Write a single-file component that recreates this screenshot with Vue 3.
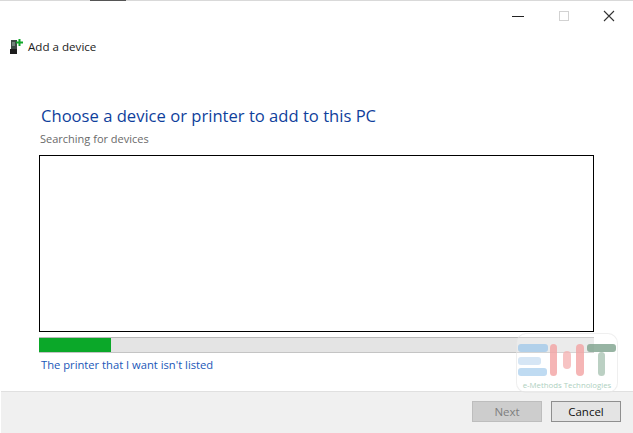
<template>
  <div class="dialog">
    <div class="top-edge"><span class="edge-blob"></span></div>

    <div class="window-controls">
      <svg class="ctl" width="12" height="12" viewBox="0 0 12 12"><path d="M0 6.500h12" stroke="#222" stroke-width="1" fill="none" /></svg>
      <svg class="ctl" width="12" height="12" viewBox="0 0 12 12"><rect x="1.500" y="1.500" width="9" height="9" stroke="#d2d2d2" fill="none" /></svg>
      <svg class="ctl" width="12" height="12" viewBox="0 0 12 12"><path d="M1 1l10 10M11 1L1 11" stroke="#333" stroke-width="1.100" fill="none" /></svg>
    </div>

    <div class="title-row">
      <svg class="device-icon" width="13" height="15" viewBox="0 0 13 15">
        <path d="M1 1h6v9H1z" fill="#3c4a44" />
        <rect x="2" y="3" width="3" height="4" fill="#71857b" />
        <rect x="0" y="10" width="7" height="5" fill="#1d1d1d" />
        <path d="M8.500 0h2v2.500H13v2h-2.500V7h-2V4.500H6v-2h2.500z" fill="#10a82a" />
      </svg>
      <span>Add a device</span>
    </div>

    <main class="content">
      <h1>Choose a device or printer to add to this PC</h1>
      <p class="status">Searching for devices</p>
      <div class="device-list"></div>
      <div class="progress"><div class="progress-bar" :style="{ width: progress + '%' }"></div></div>
      <a class="printer-link">The printer that I want isn't listed</a>
    </main>

    <footer class="footer">
      <button class="btn" disabled>Next</button>
      <button class="btn cancel">Cancel</button>
    </footer>

    <div class="watermark">
      <svg width="101" height="46" viewBox="0 0 101 46">
        <rect x="1" y="10" width="30" height="8" rx="3" fill="#a9cdec" />
        <rect x="1" y="23" width="23" height="8" rx="3" fill="#cfe2f4" />
        <rect x="1" y="34" width="29" height="8" rx="3" fill="#b5d5f0" />
        <rect x="33" y="10" width="7" height="32" rx="3.500" fill="#f4a9a9" />
        <rect x="46" y="17" width="8" height="18" rx="4" fill="#f6b9b9" />
        <rect x="59" y="10" width="8" height="32" rx="4" fill="#f4a9a9" />
        <rect x="70" y="10" width="29" height="8" rx="3" fill="#86a893" />
        <rect x="81" y="18" width="7" height="24" rx="3.500" fill="#b0c8b9" />
      </svg>
      <span>e-Methods Technologies</span>
    </div>
  </div>
</template>

<script setup>
const progress = 13
</script>

<style>
html,
body {
  margin: 0;
  background: #fff;
}
</style>

<style scoped>
.dialog {
  position: relative;
  width: 633px;
  height: 433px;
  overflow: hidden;
  background: #fff;
  display: flex;
  flex-direction: column;
  font-family: "Open Sans", "Noto Sans", sans-serif;
}

.top-edge {
  position: relative;
  height: 1px;
  flex: none;
  background: #d9d9d9;
}

.edge-blob {
  position: absolute;
  left: 90px;
  top: 0;
  width: 36px;
  height: 1px;
  background: #555;
}

.window-controls {
  position: absolute;
  top: 10px;
  left: 512px;
  display: flex;
  gap: 33px;
}

.window-controls svg:first-child {
  margin-right: 1px;
}

.title-row {
  display: flex;
  align-items: center;
  gap: 5px;
  margin: 36px 0 0 10px;
  height: 18px;
  font-size: 11.6px;
  color: #1c1c1c;
}

.device-icon {
  margin-top: 1px;
}

.content {
  flex: 1;
  display: flex;
  flex-direction: column;
  padding: 0 39px;
}

h1 {
  margin: 49px 0 0 2px;
  height: 24px;
  line-height: 24px;
  font-size: 16.6px;
  font-weight: 400;
  color: #0f3f9c;
}

.status {
  margin: 2px 0 0 1px;
  height: 17px;
  line-height: 17px;
  font-size: 11px;
  color: #6a6a6a;
}

.device-list {
  margin-top: 8px;
  height: 175px;
  border: 1px solid #000;
  background: #fff;
}

.progress {
  margin-top: 5px;
  height: 14px;
  background: #e4e4e4;
  border-top: 1px solid #b9b9b9;
  border-bottom: 1px solid #c4c4c4;
  width: 555px;
}

.progress-bar {
  height: 100%;
  background: #0ba829;
}

.printer-link {
  margin: 3px 0 0 2px;
  height: 18px;
  line-height: 18px;
  font-size: 11.2px;
  color: #1a57b8;
}

.footer {
  height: 42px;
  margin-left: 1px;
  flex: none;
  box-sizing: border-box;
  display: flex;
  justify-content: flex-end;
  gap: 9px;
  padding: 9px 12px 0 0;
  background: #f0f0f0;
  border-top: 1px solid #e0e0e0;
}

.btn {
  width: 70px;
  height: 21px;
  padding: 0;
  font-family: inherit;
  font-size: 11.5px;
  color: #111;
  background: #e4e4e4;
  border: 1px solid #8f8f8f;
}

.btn:disabled {
  color: #7e7e7e;
  background: #cdcdcd;
  border-color: #bdbdbd;
}

.watermark {
  position: absolute;
  left: 516px;
  top: 333px;
  width: 102px;
  height: 60px;
  box-sizing: border-box;
  border-radius: 10px;
  border: 1px solid rgba(225, 225, 225, 0.6);
  background: rgba(255, 255, 255, 0.35);
  display: flex;
  flex-direction: column;
  align-items: center;
  opacity: 0.85;
}

.watermark svg {
  flex: none;
}

.watermark span {
  font-size: 7.8px;
  line-height: 11px;
  font-weight: 400;
  white-space: nowrap;
  color: #9fc9b5;
}
</style>
